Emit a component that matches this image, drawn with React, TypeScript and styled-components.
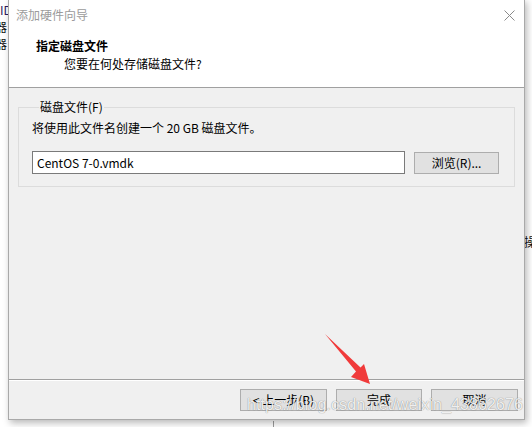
import React from "react";
import styled, { createGlobalStyle } from "styled-components";

const Global = createGlobalStyle`
  html, body { margin: 0; padding: 0; background: #fff; overflow: hidden; }
  * { box-sizing: border-box; }
`;

const FONT = `"Noto Sans CJK SC", "Noto Sans", sans-serif`;

const Desktop = styled.div`
  position: relative;
  width: 532px;
  height: 427px;
  background: #fff;
  overflow: hidden;
  font-family: ${FONT};
  font-size: 12px;
  color: #000;
`;

const BgChar = styled.div<{ $x: number; $y: number; $color?: string }>`
  position: absolute;
  left: ${(p) => p.$x}px;
  top: ${(p) => p.$y}px;
  font-size: 12px;
  line-height: 14px;
  color: ${(p) => p.$color || "#111"};
  white-space: nowrap;
`;

const DeskLine = styled.div`
  position: absolute;
  left: 273px;
  top: 421px;
  width: 1px;
  height: 6px;
  background: #9a9a9a;
`;

const Window = styled.div`
  position: absolute;
  left: 8px;
  top: -1px;
  width: 517px;
  height: 421px;
  border: 1px solid #a9a9a9;
  background: #fff;
  display: flex;
  flex-direction: column;
  box-shadow: 2px 3px 7px rgba(0, 0, 0, 0.28);
`;

const TitleBar = styled.div`
  height: 30px;
  flex: none;
  display: flex;
  align-items: center;
  justify-content: space-between;
  padding: 0 9px 0 7px;
  color: #9b9b9b;
  line-height: 16px;
`;

const CloseIcon = styled.svg`
  width: 11px;
  height: 11px;
  margin-top: 0px;
`;

const Header = styled.div`
  height: 58px;
  flex: none;
  border-bottom: 1px solid #a0a0a0;
  padding: 8px 0 0 27px;
  display: flex;
  flex-direction: column;
  gap: 2px;
  line-height: 16px;
`;

const HeaderTitle = styled.div`
  font-weight: 700;
`;

const HeaderSub = styled.div`
  padding-left: 28px;
`;

const Body = styled.div`
  flex: 1;
  background: #f0f0f0;
  padding: 11px 9px 0;
`;

const Group = styled.fieldset`
  margin: 0;
  padding: 0 15px 12px 13px;
  border: 1px solid #dcdcdc;
  min-width: 0;
`;

const Legend = styled.legend`
  margin-left: 7px;
  padding: 0 1px;
  line-height: 16px;
`;

const Desc = styled.div`
  margin-top: 5px;
  line-height: 16px;
`;

const Row = styled.div`
  margin-top: 15px;
  display: flex;
  align-items: center;
  gap: 9px;
`;

const TextBox = styled.div`
  width: 374px;
  height: 23px;
  border: 1px solid #7a7a7a;
  background: #fff;
  padding: 0 4px;
  display: flex;
  align-items: center;
  font-size: 12px;
  line-height: 16px;
`;

const Button = styled.div<{ $w: number }>`
  width: ${(p) => p.$w}px;
  height: 22px;
  border: 1px solid #adadad;
  background: #e1e1e1;
  display: flex;
  align-items: center;
  justify-content: center;
  line-height: 16px;
  font-size: 12px;
`;

const Footer = styled.div`
  height: 40px;
  flex: none;
  background: #f0f0f0;
  border-top: 1px solid #a0a0a0;
  box-shadow: inset 0 1px 0 #fff;
  display: flex;
  justify-content: flex-end;
  gap: 9px;
  padding: 9px 6px 0 0;
`;

const Overlay = styled.svg`
  position: absolute;
  left: 0;
  top: 0;
  width: 532px;
  height: 427px;
  pointer-events: none;
`;

const Watermark = styled.div`
  position: absolute;
  left: 247px;
  top: 395px;
  font-family: "Liberation Sans", Arial, sans-serif;
  font-size: 16px;
  line-height: 20px;
  color: rgba(255, 255, 255, 0.88);
  text-shadow: 0 0 1px rgba(0, 0, 0, 0.35), 0 0 1px rgba(0, 0, 0, 0.2);
  white-space: nowrap;
  letter-spacing: 0.1px;
`;

export default function App() {
  return (
    <Desktop>
      <Global />
      <BgChar $x={0} $y={3} $color="#2a1a60">ID</BgChar>
      <BgChar $x={-5} $y={20}>器</BgChar>
      <BgChar $x={-5} $y={37}>器</BgChar>
      <BgChar $x={524} $y={235}>操</BgChar>
      <DeskLine />
      <Window>
        <TitleBar>
          <span>添加硬件向导</span>
          <CloseIcon viewBox="0 0 11 11">
            <path d="M0.5 0.5 L10.5 10.5 M10.5 0.5 L0.5 10.5" stroke="#8a8a8a" strokeWidth="1" fill="none" />
          </CloseIcon>
        </TitleBar>
        <Header>
          <HeaderTitle>指定磁盘文件</HeaderTitle>
          <HeaderSub>您要在何处存储磁盘文件?</HeaderSub>
        </Header>
        <Body>
          <Group>
            <Legend>磁盘文件(F)</Legend>
            <Desc>将使用此文件名创建一个 20 GB 磁盘文件。</Desc>
            <Row>
              <TextBox>CentOS 7-0.vmdk</TextBox>
              <Button $w={85}>浏览(R)...</Button>
            </Row>
          </Group>
        </Body>
        <Footer>
          <Button $w={87}>&lt; 上一步(B)</Button>
          <Button $w={86}>完成</Button>
          <Button $w={87}>取消</Button>
        </Footer>
      </Window>
      <Overlay viewBox="0 0 532 427">
        <polygon
          points="325,334 356,371.5 351,377 370,384 364,364 360.5,367.5"
          fill="#f03a3a"
        />
      </Overlay>
      <Watermark>https://blog.csdn.net/weixin_43862676</Watermark>
    </Desktop>
  );
}
